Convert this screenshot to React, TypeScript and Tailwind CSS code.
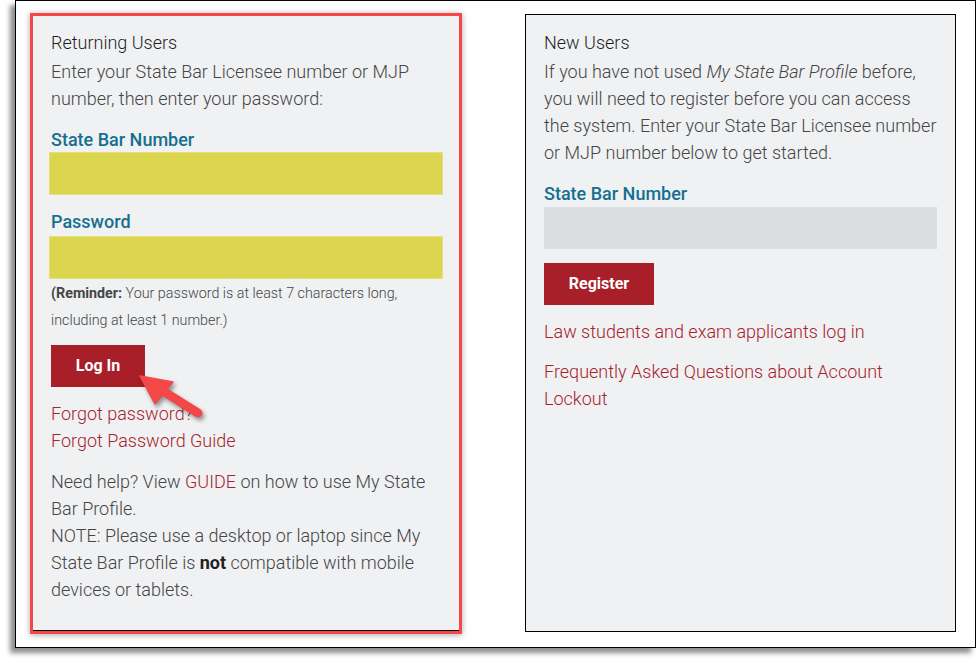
import React from "react";

const font = { fontFamily: "Roboto, 'Liberation Sans', sans-serif" };

export default function App() {
  return (
    <div className="relative w-[976px] h-[663px] bg-white overflow-hidden" style={font}>
      <div className="ml-[15px] w-[961px] h-[648px] border-[1.5px] border-black bg-white shadow-[-5px_5px_5px_rgba(0,0,0,0.45)] flex items-start pt-[12px] pl-[14px]">
        {/* Left panel with red annotation */}
        <div className="w-[432px] h-[621px] border-[3px] border-[#f44848] shadow-[0_1px_6px_rgba(0,0,0,0.35)] bg-[#f0f1f3] flex flex-col">
          <div className="flex-1 pl-[18px] pr-[17px] pt-[13px] font-light text-[18px] leading-[27px] text-[#454545]">
            <div className="text-[#1e1e1e]">Returning Users</div>
            <p className="mt-[2px]">Enter your State Bar Licensee number or MJP number, then enter your password:</p>
            <div className="mt-[16px] font-medium text-[#14708f] leading-[24px]">State Bar Number</div>
            <div className="h-[43px] w-[394px] -ml-[2px] bg-[#dcd54e] border border-[#e4df7c]" />
            <div className="mt-[15px] font-medium text-[#14708f] leading-[24px]">Password</div>
            <div className="mt-[2px] h-[43px] w-[394px] -ml-[2px] bg-[#dcd54e] border border-[#e4df7c]" />
            <p className="mt-[1px] text-[14.3px] leading-[27px]">
              <span className="font-bold">(Reminder:</span> Your password is at least 7 characters long, including at least 1 number.)
            </p>
            <button className="mt-[11px] w-[94px] h-[42px] bg-[#a91f29] text-white font-bold text-[16px] leading-none">Log In</button>
            <div className="mt-[13px] text-[#a6232d]">Forgot password?</div>
            <div className="text-[#a6232d]">Forgot Password Guide</div>
            <p className="mt-[14px]">
              Need help? View <span className="text-[#a6232d]">GUIDE</span> on how to use My State Bar Profile.
              <br />
              NOTE: Please use a desktop or laptop since My State Bar Profile is <span className="font-bold text-[#222]">not</span> compatible with mobile devices or tablets.
            </p>
          </div>
          <div className="h-[1.5px] bg-black" />
        </div>

        {/* Right panel */}
        <div className="ml-[63px] mt-[1px] w-[431px] h-[618px] border-[1.5px] border-black bg-[#f0f1f3] px-[18px] pt-[14px] font-light text-[18px] leading-[27px] text-[#454545]">
          <div className="text-[#1e1e1e]">New Users</div>
          <p className="mt-[2px]">
            If you have not used <em>My State Bar Profile</em> before, you will need to register before you can access the system. Enter your State Bar Licensee number or MJP number below to get started.
          </p>
          <div className="mt-[16px] font-medium text-[#14708f] leading-[24px]">State Bar Number</div>
          <div className="mt-[1px] h-[42px] w-[393px] bg-[#dcdde0]" />
          <button className="mt-[14px] w-[110px] h-[42px] bg-[#a91f29] text-white font-bold text-[16px] leading-none">Register</button>
          <div className="mt-[13px] text-[#a6232d]">Law students and exam applicants log in</div>
          <div className="mt-[13px] text-[#a6232d]">Frequently Asked Questions about Account Lockout</div>
        </div>
      </div>

      {/* Red arrow annotation */}
      <svg
        className="absolute left-0 top-0 pointer-events-none drop-shadow-[2px_3px_2px_rgba(0,0,0,0.4)]"
        width="976"
        height="663"
        viewBox="0 0 976 663"
      >
        <line x1="163" y1="391" x2="198" y2="413" stroke="#f44848" strokeWidth="9" strokeLinecap="round" />
        <polygon points="140,376 173,382 155,404" fill="#f44848" stroke="#f44848" strokeWidth="1.5" strokeLinejoin="round" />
      </svg>
    </div>
  );
}
